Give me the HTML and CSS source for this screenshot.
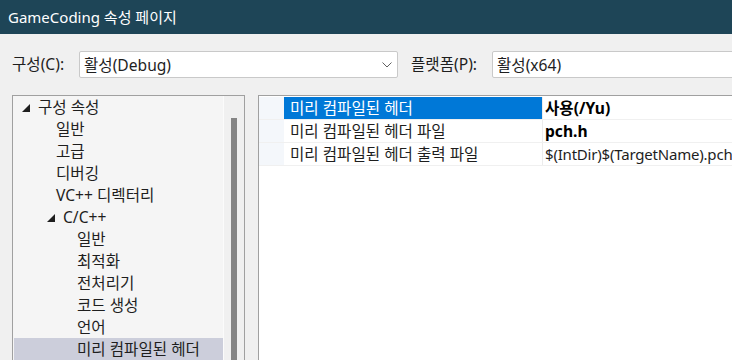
FILE: index.html
```html
<!DOCTYPE html>
<html lang="ko">
<head>
    <meta charset="UTF-8">
    <title>GameCoding 속성 페이지</title>
    <link rel="stylesheet" href="styles.css">
</head>
<body>
    <div class="titlebar">GameCoding 속성 페이지</div>

    <div class="toolbar">
        <label class="field-label config-label">구성(C):</label>
        <div class="combo combo-config">
            <span>활성(Debug)</span>
            <svg class="chevron" width="10" height="6" viewBox="0 0 10 6">
                <polyline points="0.5,0.5 5,5 9.5,0.5" fill="none" stroke="#606060" stroke-width="1"/>
            </svg>
        </div>
        <label class="field-label platform-label">플랫폼(P):</label>
        <div class="combo combo-platform">
            <span>활성(x64)</span>
        </div>
    </div>

    <div class="main">
        <div class="tree-panel">
            <ul class="tree">
                <li class="lvl0"><svg class="arrow" width="8" height="8" viewBox="0 0 8 8"><polygon points="0,8 8,8 8,0" fill="#1e1e1e"/></svg>구성 속성</li>
                <li class="lvl1">일반</li>
                <li class="lvl1">고급</li>
                <li class="lvl1">디버깅</li>
                <li class="lvl1">VC++ 디렉터리</li>
                <li class="lvl1 open"><svg class="arrow" width="8" height="8" viewBox="0 0 8 8"><polygon points="0,8 8,8 8,0" fill="#1e1e1e"/></svg>C/C++</li>
                <li class="lvl2">일반</li>
                <li class="lvl2">최적화</li>
                <li class="lvl2">전처리기</li>
                <li class="lvl2">코드 생성</li>
                <li class="lvl2">언어</li>
                <li class="lvl2 selected">미리 컴파일된 헤더</li>
            </ul>
            <div class="scrollbar">
                <div class="thumb"></div>
            </div>
        </div>

        <div class="grid-panel">
            <div class="prop-row active">
                <div class="gutter"></div>
                <div class="prop-name">미리 컴파일된 헤더</div>
                <div class="prop-value bold">사용(/Yu)</div>
            </div>
            <div class="prop-row">
                <div class="gutter"></div>
                <div class="prop-name">미리 컴파일된 헤더 파일</div>
                <div class="prop-value bold">pch.h</div>
            </div>
            <div class="prop-row">
                <div class="gutter"></div>
                <div class="prop-name">미리 컴파일된 헤더 출력 파일</div>
                <div class="prop-value">$(IntDir)$(TargetName).pch</div>
            </div>
        </div>
    </div>
</body>
</html>
```

FILE: styles.css
```css
html, body {
    margin: 0;
    padding: 0;
}
body {
    width: 732px;
    height: 360px;
    overflow: hidden;
    background: #f0f0f0;
    font-family: "Noto Sans", "Noto Sans CJK KR", sans-serif;
    font-size: 15.6px;
    color: #1e1e1e;
}

.titlebar {
    height: 34px;
    line-height: 34px;
    background: #1e4557;
    color: #ffffff;
    padding-left: 8px;
    font-size: 15px;
}

.toolbar {
    display: flex;
    align-items: center;
    padding-top: 17px;
    height: 27px;
    white-space: nowrap;
}
.field-label {
    line-height: 27px;
    flex-shrink: 0;
}
.config-label {
    width: 67px;
    padding-left: 12px;
}
.platform-label {
    width: 94px;
    padding-left: 13px;
    box-sizing: border-box;
}
.combo {
    box-sizing: border-box;
    height: 27px;
    background: #ffffff;
    border: 1px solid #c9c9c9;
    border-radius: 2px;
    display: flex;
    align-items: center;
    padding-left: 4px;
    flex-shrink: 0;
}
.combo-config {
    width: 319px;
    justify-content: space-between;
    padding-right: 5px;
}
.combo-platform {
    width: 260px;
}
.chevron {
    display: block;
}

/* panels run off the bottom of the window */
.main {
    display: flex;
    height: 265px;
    margin-top: 17px;
    padding-left: 12px;
    gap: 13px;
}

.tree-panel {
    box-sizing: border-box;
    width: 233px;
    border: 1px solid #a0a0a0;
    border-bottom: none;
    display: flex;
    flex-shrink: 0;
    overflow: hidden;
}
.tree {
    list-style: none;
    margin: 0;
    padding: 0 0 0 1px;
    width: 209px;
    background: #f5f5f5;
    border-right: 1px solid #fbfbfb;
}
.tree li {
    height: 22px;
    line-height: 22px;
    white-space: nowrap;
    display: flex;
    align-items: center;
}
.tree .arrow {
    margin-right: 8px;
    margin-top: 1px;
}
.tree .lvl0 {
    padding-left: 8px;
}
.tree .lvl1 {
    padding-left: 42px;
}
.tree .lvl1.open {
    padding-left: 33px;
}
.tree .lvl2 {
    padding-left: 63px;
}
.tree .selected {
    background: #cccedb;
}
.scrollbar {
    flex: 1;
    background: #f0f0f0;
    padding-top: 22px;
}
.thumb {
    margin-left: 7px;
    width: 6px;
    height: 100%;
    background: #858585;
}

.grid-panel {
    flex: 1;
    background: #ffffff;
    border-top: 1px solid #a0a0a0;
    border-left: 1px solid #a0a0a0;
    padding-top: 1px;
}
.prop-row {
    display: flex;
    height: 22px;
    line-height: 22px;
    border-bottom: 1px solid #f0f0f0;
    white-space: nowrap;
}
.gutter {
    width: 25px;
    background: #f4f7fb;
    flex-shrink: 0;
}
.prop-name {
    width: 252px;
    padding-left: 6px;
    border-right: 1px solid #ececec;
    flex-shrink: 0;
}
.prop-row.active .prop-name {
    background: #0078d7;
    color: #ffffff;
}
.prop-value {
    padding-left: 2px;
    font-size: 15px;
    letter-spacing: -0.2px;
    color: #1e1e1e;
}
.prop-value.bold {
    font-size: 15.6px;
    letter-spacing: 0;
    font-weight: bold;
    color: #000000;
}
```
